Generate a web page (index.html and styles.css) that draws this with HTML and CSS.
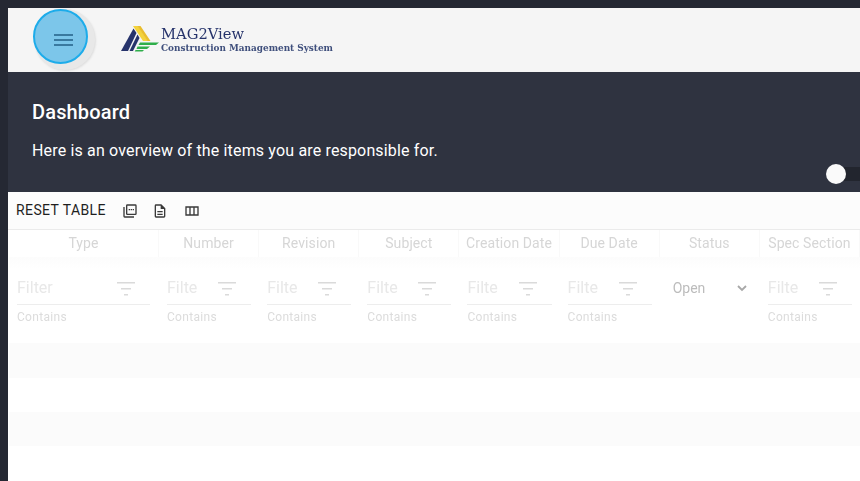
FILE: index.html
```html
<!DOCTYPE html>
<html lang="en">
<head>
<meta charset="utf-8">
<title>MAG2View Dashboard</title>
<link rel="stylesheet" href="styles.css">
</head>
<body>
<div class="app">
  <header class="topbar">
    <button class="menu-btn" aria-label="Menu"><span class="bars"><i></i><i></i><i></i></span></button>
    <div class="logo">
      <svg class="logo-mark" width="38" height="28" viewBox="0 0 38 28">
        <path d="M12 1h5l10 15H22z" fill="#f3d23c"/>
        <path d="M16.500 1h3l10 15h-3z" fill="#e9bd2e"/>
        <path d="M12.500 3.500 15.500 8 7 26H0z" fill="#26336b"/>
        <path d="M16.500 9.500 18.500 13 12 26H8.500z" fill="#26336b"/>
        <path d="M19 17.500H38L35 20H17.500z" fill="#2fae4a"/>
        <path d="M16.500 21.500H29L26 24H15.500z" fill="#2fae4a"/>
        <path d="M14.500 25H23L21.500 26.500H13.800z" fill="#2fae4a"/>
      </svg>
      <div class="logo-text">
        <div class="logo-name">MAG2View</div>
        <div class="logo-sub">Construction Management System</div>
      </div>
    </div>
  </header>
  <section class="hero">
    <h1>Dashboard</h1>
    <p>Here is an overview of the items you are responsible for.</p>
    <div class="toggle"><span class="knob"></span></div>
  </section>
  <section class="panel">
    <div class="toolbar">
      <span class="reset">RESET TABLE</span>
      <svg class="tool tool-pdf" width="16" height="16" viewBox="0 0 24 24"><path fill="#3a3a3a" d="M20 2H8a2 2 0 0 0-2 2v12a2 2 0 0 0 2 2h12a2 2 0 0 0 2-2V4a2 2 0 0 0-2-2zm0 14H8V4h12zM4 6H2v14a2 2 0 0 0 2 2h14v-2H4z"/><path fill="#3a3a3a" d="M10 9h2v2h-2zm3 0h2v2h-2zm3 0h2v2h-2z"/></svg>
      <svg class="tool tool-doc" width="16" height="16" viewBox="0 0 24 24"><path fill="#3a3a3a" d="M14 2H6a2 2 0 0 0-2 2v16a2 2 0 0 0 2 2h12a2 2 0 0 0 2-2V8zm4 18H6V4h7v5h5zM8 12h8v2H8zm0 4h8v2H8z"/></svg>
      <svg class="tool tool-col" width="16" height="16" viewBox="0 0 24 24"><path fill="#3a3a3a" d="M2 5v14h20V5zm6 12H4V7h4zm6 0h-4V7h4zm6 0h-4V7h4z"/></svg>
    </div>
    <div class="table">
      <div class="head">
        <div>Type</div><div>Number</div><div>Revision</div><div>Subject</div><div>Creation Date</div><div>Due Date</div><div>Status</div><div>Spec Section</div>
      </div>
      <div class="filters">
        <div class="filter first"><div class="field"><span class="ph">Filter</span><svg class="fi" width="24" height="24" viewBox="0 0 24 24"><path d="M3 6h18v1.500H3zm4 6h10v1.500H7zm3 6h4v1.500h-4z"/></svg></div><small>Contains</small></div>
        <div class="filter"><div class="field"><span class="ph">Filte</span><svg class="fi" width="24" height="24" viewBox="0 0 24 24"><path d="M3 6h18v1.500H3zm4 6h10v1.500H7zm3 6h4v1.500h-4z"/></svg></div><small>Contains</small></div>
        <div class="filter"><div class="field"><span class="ph">Filte</span><svg class="fi" width="24" height="24" viewBox="0 0 24 24"><path d="M3 6h18v1.500H3zm4 6h10v1.500H7zm3 6h4v1.500h-4z"/></svg></div><small>Contains</small></div>
        <div class="filter"><div class="field"><span class="ph">Filte</span><svg class="fi" width="24" height="24" viewBox="0 0 24 24"><path d="M3 6h18v1.500H3zm4 6h10v1.500H7zm3 6h4v1.500h-4z"/></svg></div><small>Contains</small></div>
        <div class="filter"><div class="field"><span class="ph">Filte</span><svg class="fi" width="24" height="24" viewBox="0 0 24 24"><path d="M3 6h18v1.500H3zm4 6h10v1.500H7zm3 6h4v1.500h-4z"/></svg></div><small>Contains</small></div>
        <div class="filter"><div class="field"><span class="ph">Filte</span><svg class="fi" width="24" height="24" viewBox="0 0 24 24"><path d="M3 6h18v1.500H3zm4 6h10v1.500H7zm3 6h4v1.500h-4z"/></svg></div><small>Contains</small></div>
        <div class="filter status"><div class="field plain"><span class="open">Open</span><svg class="chev" width="12" height="12" viewBox="0 0 12 12"><path d="M2 4l4 4 4-4" fill="none" stroke="#a8a8a8" stroke-width="1.800"/></svg></div></div>
        <div class="filter"><div class="field"><span class="ph">Filte</span><svg class="fi" width="24" height="24" viewBox="0 0 24 24"><path d="M3 6h18v1.500H3zm4 6h10v1.500H7zm3 6h4v1.500h-4z"/></svg></div><small>Contains</small></div>
      </div>
      <div class="row shade r1"></div>
      <div class="row"></div>
      <div class="row shade"></div>
    </div>
  </section>
</div>
</body>
</html>
```
FILE: styles.css
```css
* { box-sizing: border-box; }
html, body { margin: 0; height: 100%; overflow: hidden; }
body { background: #252833; font-family: Roboto, sans-serif; padding: 8px 0 0 8px; }
.app { display: flex; flex-direction: column; height: 473px; }

.topbar { height: 64px; background: #f5f5f5; display: flex; align-items: center; padding-left: 25px; flex: none; }
.menu-btn { width: 55px; height: 55px; margin-top: -8px; padding: 0; border: 2px solid #1dacea; border-radius: 50%; background: #7cc6ea; display: flex; align-items: center; justify-content: center; box-shadow: 4px 3px 0 3px #e8e8e8, 5px 4px 2px 3px #dedede; }
.bars { display: flex; flex-direction: column; gap: 3px; margin: 8px 0 0 5px; }
.bars i { display: block; width: 19px; height: 2px; background: #39799f; }
.logo { display: flex; align-items: center; margin-left: 33px; margin-top: -3px; }
.logo-mark { margin-right: 2px; }
.logo-text { color: #26336b; font-family: "DejaVu Serif", serif; filter: blur(0.3px); margin-top: 3px; }
.logo-name { font-size: 14.700px; line-height: 16px; }
.logo-sub { font-size: 8.900px; line-height: 12px; font-weight: 700; color: #3f4f7c; white-space: nowrap; }

.hero { position: relative; height: 120px; background: #2f3340; color: #fff; padding: 28px 24px 0; flex: none; }
.hero h1 { margin: 0; font-size: 20px; line-height: 24px; font-weight: 500; letter-spacing: 0.150px; }
.hero p { margin: 17px 0 0; font-size: 16px; line-height: 20px; letter-spacing: 0.160px; }
.toggle { position: absolute; right: 0; top: 95px; width: 24px; height: 14px; background: #22252e; }
.knob { position: absolute; left: -10px; top: -3px; width: 20px; height: 20px; border-radius: 50%; background: #fafafa; }

.panel { flex: 1; background: #fff; }
.toolbar { height: 38px; background: #fcfcfc; border-bottom: 1px solid #ebebeb; display: flex; align-items: center; padding-left: 8px; }
.reset { font-size: 14px; letter-spacing: 0.400px; color: #1f1f1f; width: 106px; margin-top: -2px; }
.tool-doc { margin-left: 14px; }
.tool-col { margin-left: 16px; }

.table { display: flex; flex-direction: column; padding-left: 1px; filter: blur(0.4px); }
.head, .filters { display: grid; grid-template-columns: 150px repeat(7, 100.150px); }
.head { height: 27px; line-height: 26px; text-align: center; font-size: 14px; color: #d6d6d6; letter-spacing: 0.100px; }
.head > div { border-right: 1px solid #f9f9f9; white-space: nowrap; }
.filters { height: 86px; padding-top: 14px; background: linear-gradient(#fcfcfc, #fff 12px); }
.filter { padding: 0 8px; }
.filter.first { padding-right: 9px; }
.filter.status { padding: 0 8px 0 13px; }
.field { height: 34px; display: flex; align-items: center; justify-content: space-between; border-bottom: 1px solid #ededed; padding: 0 12px 0 0; }
.field.plain { border-bottom: 0; padding: 0 4px 0 0; }
.ph { font-size: 16px; color: #e8e8e8; }
.open { font-size: 14px; color: #bcbcbc; }
.fi { fill: #dadada; }
small { display: block; font-size: 12px; color: #dcdcdc; margin-top: 5px; letter-spacing: 0.300px; }
.row { height: 34px; }
.r1 { height: 35px; }
.shade { background: #fbfbfb; }
```
